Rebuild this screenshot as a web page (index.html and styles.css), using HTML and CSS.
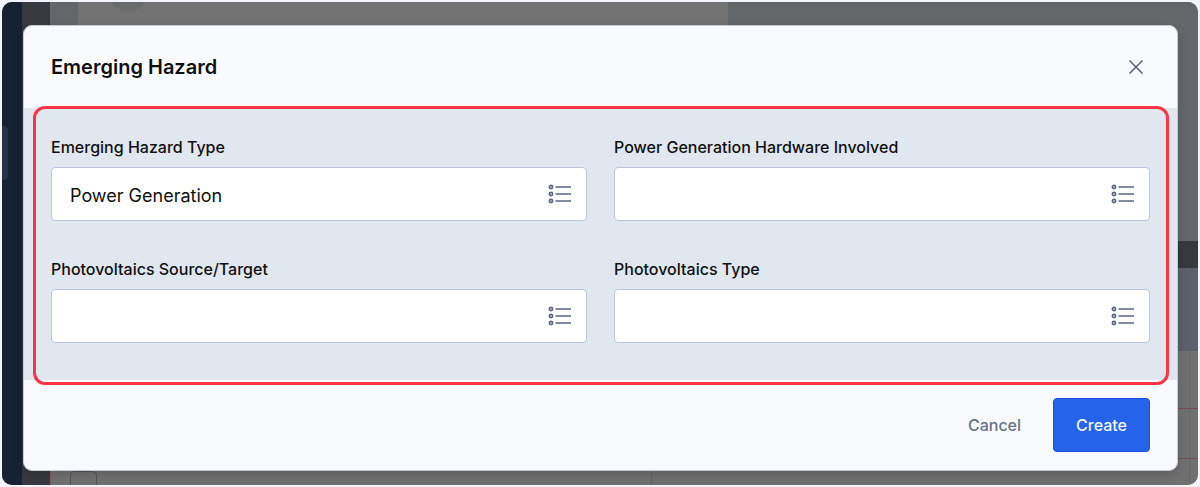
FILE: index.html
```html
<!DOCTYPE html>
<html lang="en">
<head>
    <meta charset="UTF-8">
    <meta name="viewport" content="width=device-width, initial-scale=1.0">
    <title>Emerging Hazard</title>
    <link rel="stylesheet" href="styles.css">
</head>
<body>
    <svg class="sprite" width="0" height="0" aria-hidden="true">
        <symbol id="icon-list" viewBox="0 0 24 20" fill="none" stroke="currentColor">
            <circle cx="3" cy="3" r="1.600" stroke-width="1.700"/>
            <circle cx="3" cy="10" r="1.600" stroke-width="1.700"/>
            <circle cx="3" cy="17" r="1.600" stroke-width="1.700"/>
            <path d="M7.500 3H23M7.500 10H23M7.500 17H23" stroke-width="1.500"/>
        </symbol>
    </svg>

    <div class="window">
        <!-- Dimmed page behind the dialog -->
        <div class="app" aria-hidden="true">
            <div class="app-nav"><div class="nav-active"></div></div>
            <div class="app-rail"></div>
            <div class="app-page">
                <div class="page-hero">
                    <div class="hero-main"><div class="hero-avatar"></div></div>
                </div>
                <div class="page-bar"></div>
                <div class="page-heading"></div>
                <div class="page-table">
                    <div class="table-row"></div>
                    <div class="table-row"></div>
                    <div class="table-row"><div class="row-box"></div></div>
                </div>
            </div>
        </div>

        <form class="modal" role="dialog" aria-labelledby="modal-title">
            <header class="modal-header">
                <h1 id="modal-title">Emerging Hazard</h1>
                <button class="close" type="button" aria-label="Close">
                    <svg width="16" height="16" viewBox="0 0 16 16" fill="none" stroke="currentColor" stroke-width="1.500">
                        <path d="M1.500 1.500L14.500 14.500M14.500 1.500L1.500 14.500"/>
                    </svg>
                </button>
            </header>

            <div class="modal-body">
                <div class="field">
                    <label for="hazard-type">Emerging Hazard Type</label>
                    <div class="control">
                        <input id="hazard-type" type="text" value="Power Generation">
                        <button class="pick" type="button" aria-label="Choose hazard type"><svg><use href="#icon-list"/></svg></button>
                    </div>
                </div>
                <div class="field">
                    <label for="hardware">Power Generation Hardware Involved</label>
                    <div class="control">
                        <input id="hardware" type="text">
                        <button class="pick" type="button" aria-label="Choose hardware"><svg><use href="#icon-list"/></svg></button>
                    </div>
                </div>
                <div class="field">
                    <label for="pv-source">Photovoltaics Source/Target</label>
                    <div class="control">
                        <input id="pv-source" type="text">
                        <button class="pick" type="button" aria-label="Choose source or target"><svg><use href="#icon-list"/></svg></button>
                    </div>
                </div>
                <div class="field">
                    <label for="pv-type">Photovoltaics Type</label>
                    <div class="control">
                        <input id="pv-type" type="text">
                        <button class="pick" type="button" aria-label="Choose photovoltaics type"><svg><use href="#icon-list"/></svg></button>
                    </div>
                </div>
                <div class="highlight"></div>
            </div>

            <footer class="modal-footer">
                <button class="btn btn-cancel" type="button">Cancel</button>
                <button class="btn btn-create" type="submit">Create</button>
            </footer>
        </form>
    </div>
</body>
</html>
```

FILE: styles.css
```css
* {
    margin: 0;
    padding: 0;
    box-sizing: border-box;
}

body {
    font-family: Inter, 'Liberation Sans', sans-serif;
    background: #f3f3fb;
    color: #101010;
    padding: 2px;
}

button,
input {
    font: inherit;
    color: inherit;
    border: none;
    background: none;
}

button {
    cursor: pointer;
}

.sprite {
    position: absolute;
}

/* The page and the dialog share one grid cell */
.window {
    display: grid;
    border-radius: 10px;
    overflow: hidden;
}

.app,
.modal {
    grid-area: 1 / 1;
}

/* Page behind */
.app {
    display: flex;
    background: #707070;
}

.app-nav {
    width: 20px;
    padding-top: 124px;
    background: #162133;
}

.nav-active {
    width: 6px;
    height: 54px;
    background: #263248;
    border-radius: 0 4px 4px 0;
}

.app-rail {
    width: 28px;
    background: #37393e;
}

.app-page {
    flex: 1;
    display: flex;
    flex-direction: column;
}

.page-hero {
    height: 239px;
    padding-left: 28px;
    background: #636769;
}

.hero-main {
    width: 58%;
    height: 100%;
    padding-left: 32px;
    background: #727272;
    overflow: hidden;
}

.hero-avatar {
    width: 36px;
    height: 36px;
    margin-top: -26px;
    border-radius: 50%;
    background: #686c6c;
}

.page-bar {
    height: 27px;
    background: #36393d;
}

.page-heading {
    height: 83px;
    background: #5a616b;
}

.page-table {
    flex: 1;
    border-left: 1px solid #805c60;
    background: linear-gradient(#666, #666) calc(100% - 8px) 0 / 1px 100% no-repeat,
        linear-gradient(#636363, #636363) 600px 0 / 1px 100% no-repeat;
}

.table-row {
    height: 50px;
    border-bottom: 1px solid #784e52;
}

.table-row:first-child {
    height: 58px;
}

.table-row:last-child {
    height: 26px;
    border: none;
    padding: 12px 0 0 19px;
}

.row-box {
    width: 27px;
    height: 27px;
    border: 1px solid #555;
    border-radius: 4px;
}

/* Dialog */
.modal {
    z-index: 1;
    margin: 23px 20px 14px 21px;
    border: 1px solid #c3cad6;
    border-radius: 9px;
    background: #f9fafd;
    box-shadow: 0 4px 10px rgba(0, 0, 0, 0.15);
}

.modal-header {
    display: flex;
    justify-content: space-between;
    align-items: center;
    height: 82px;
    padding: 0 33px 0 27px;
}

.modal-header h1 {
    font-size: 20px;
    font-weight: 600;
    line-height: 28px;
}

.close {
    width: 16px;
    height: 16px;
    color: #566176;
}

.close svg {
    display: block;
}

.modal-body {
    position: relative;
    display: grid;
    grid-template-columns: 1fr 1fr;
    gap: 38px 27px;
    padding: 29px 27px 37px;
    background: #e1e7ef;
}

.field label {
    display: block;
    margin-bottom: 10px;
    font-size: 16px;
    font-weight: 500;
    line-height: 20px;
}

.control {
    display: flex;
    align-items: center;
    height: 54px;
    padding: 0 14px 0 18px;
    border: 1px solid #b9c6da;
    border-radius: 4px;
    background: #fff;
}

.control input {
    flex: 1;
    min-width: 0;
    height: 100%;
    padding-top: 2px;
    font-size: 18px;
    line-height: 24px;
    outline: none;
}

.pick svg {
    display: block;
    width: 24px;
    height: 20px;
    color: #5b6880;
}

/* Red outline drawn over the form fields */
.highlight {
    position: absolute;
    inset: -2px 8px -5px 9px;
    border: 3px solid #f93549;
    border-radius: 12px;
    pointer-events: none;
}

.modal-footer {
    display: flex;
    justify-content: flex-end;
    gap: 10px;
    padding: 18px 27px;
}

.btn {
    height: 54px;
    padding: 0 22px;
    border-radius: 4px;
    font-size: 16px;
    font-weight: 500;
}

.btn-cancel {
    color: #66738a;
}

.btn-create {
    background: #2563eb;
    border: 1px solid #1553dc;
    color: #f4f7ff;
}
```
